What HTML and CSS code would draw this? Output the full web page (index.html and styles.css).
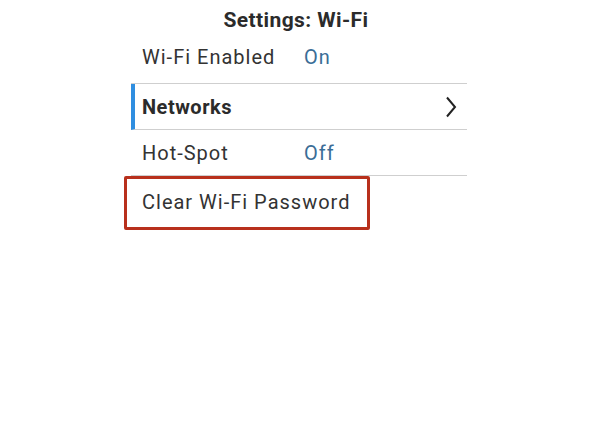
FILE: index.html
```html
<!DOCTYPE html>
<html>
<head>
<meta charset="utf-8">
<link rel="stylesheet" href="styles.css">
</head>
<body>
<div class="page">
  <h1 class="title">Settings: Wi-Fi</h1>
  <ul class="menu">
    <li class="row row-first"><span class="label">Wi-Fi Enabled</span><span class="value">On</span></li>
    <li class="row row-active"><span class="label label-bold">Networks</span>
      <svg class="chevron" width="12" height="22" viewBox="0 0 12 22"><path d="M2 1.5 L10 11 L2 20.5" fill="none" stroke="#222" stroke-width="2"/></svg>
    </li>
    <li class="row"><span class="label">Hot-Spot</span><span class="value">Off</span></li>
    <li class="row row-last"><span class="label">Clear Wi-Fi Password</span><span class="highlight"></span></li>
  </ul>
</div>
</body>
</html>
```
FILE: styles.css
```css
html, body {
  margin: 0;
  padding: 0;
  background: #ffffff;
}
body {
  font-family: Roboto, "Liberation Sans", sans-serif;
  color: #333333;
}
.page {
  width: 592px;
  height: 444px;
}
.title {
  margin: 0;
  height: 38px;
  line-height: 41px;
  font-size: 21px;
  font-weight: 700;
  letter-spacing: 0.4px;
  text-align: center;
  color: #2b2b2b;
}
.menu {
  list-style: none;
  margin: 0 0 0 131px;
  padding: 0;
  width: 336px;
}
.row {
  position: relative;
  display: flex;
  align-items: center;
  height: 46px;
  padding-left: 11px;
  font-size: 20px;
  letter-spacing: 1px;
  border-bottom: 1px solid #cfcfcf;
  box-sizing: border-box;
}
.row-first {
  padding-bottom: 7px;
}
.row-active {
  border-left: 4px solid #2f8ee0;
  padding-left: 7px;
  padding-right: 10px;
  justify-content: space-between;
}
.row-last {
  border-bottom: none;
  padding-top: 5px;
}
.label {
  width: 162px;
  white-space: nowrap;
}
.label-bold {
  font-weight: 700;
  color: #2b2b2b;
  letter-spacing: 0.5px;
}
.value {
  color: #3a6d96;
}
.chevron {
  display: block;
}
.highlight {
  position: absolute;
  left: -7px;
  top: 0;
  width: 246px;
  height: 54px;
  border: 3px solid #b8301c;
  border-radius: 2px;
  box-sizing: border-box;
}
```
